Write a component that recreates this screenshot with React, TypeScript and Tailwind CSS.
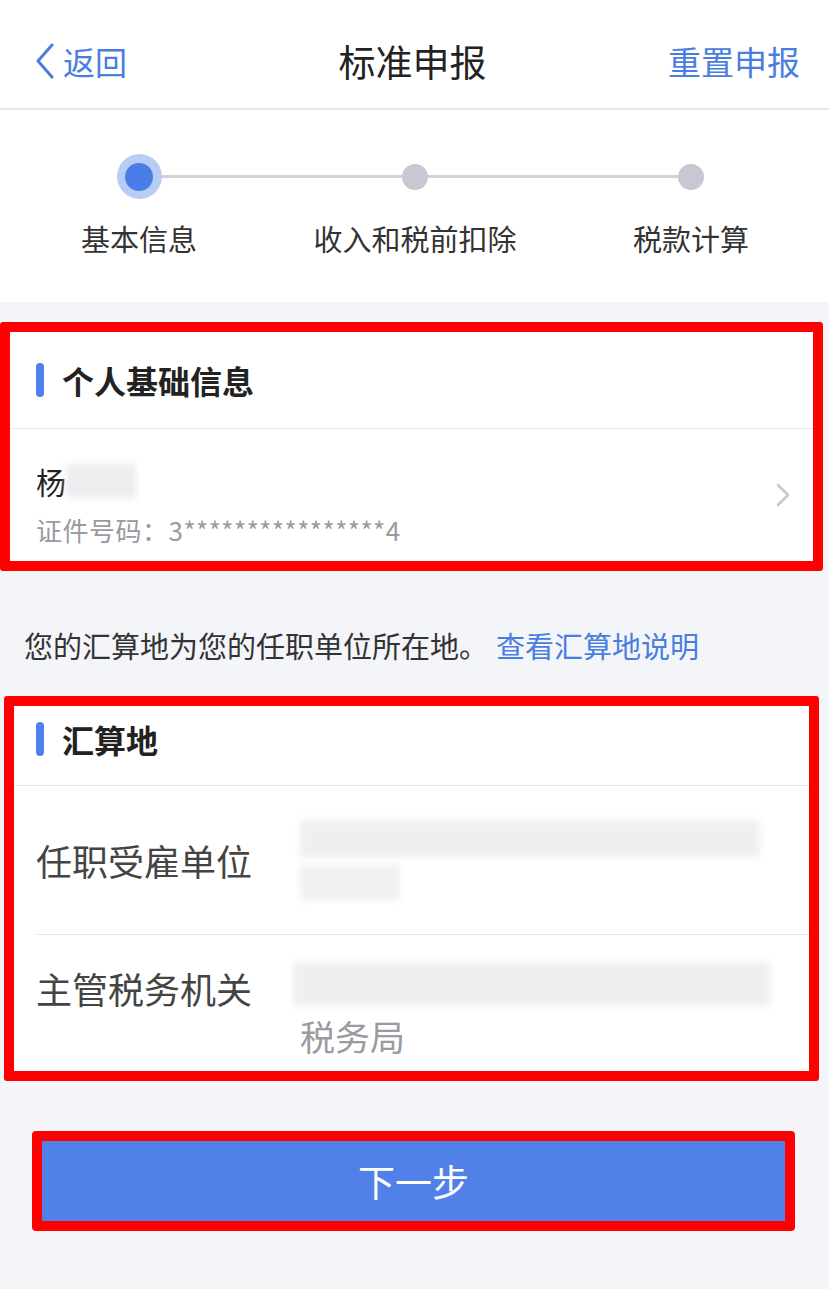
import React from 'react';

const steps = [
  { label: '基本信息', active: true },
  { label: '收入和税前扣除', active: false },
  { label: '税款计算', active: false },
];

const SectionTitle: React.FC<{ title: string; className?: string }> = ({ title, className }) => (
  <div className={`flex items-center gap-[18px] ${className ?? ''}`}>
    <span className="block w-[8px] h-[34px] rounded-full bg-[#4f7fe8]" />
    <span className="text-[32px] leading-[36px] font-semibold text-[#222]">{title}</span>
  </div>
);

const App: React.FC = () => {
  return (
    <div className="w-[829px] min-h-[1289px] bg-[#f3f5f9] font-['Noto_Sans_CJK_SC','Noto_Sans',sans-serif] text-[#222]">
      {/* nav bar */}
      <div className="h-[110px] bg-white border-b-2 border-[#e6e6e6] grid grid-cols-[1fr_auto_1fr] items-center pt-[14px] pl-[35px] pr-[29px]">
        <div className="flex items-center gap-[8px] text-[#4a7de0]">
          <svg width="20" height="36" viewBox="0 0 20 36" fill="none">
            <polyline points="17,2 3,18 17,34" stroke="#4a7de0" strokeWidth="3" strokeLinecap="round" strokeLinejoin="round" />
          </svg>
          <span className="text-[32px] leading-[40px]">返回</span>
        </div>
        <div className="text-[37px] leading-[44px] text-[#222] mr-[10px]">标准申报</div>
        <div className="text-[33px] leading-[40px] text-[#4a7de0] justify-self-end">重置申报</div>
      </div>

      {/* steps */}
      <div className="h-[192px] bg-white relative pl-[1px]">
        <div className="absolute left-[139px] right-[140px] top-[65px] h-[3px] bg-[#d2d2d6]" />
        <div className="grid grid-cols-[276px_276px_276px] relative">
          {steps.map((s) => (
            <div key={s.label} className="flex flex-col items-center pt-[44px]">
              <div className="h-[45px] flex items-center justify-center">
                {s.active ? (
                  <div className="w-[45px] h-[45px] rounded-full bg-[#b7cdf6] flex items-center justify-center">
                    <div className="w-[28px] h-[28px] rounded-full bg-[#4a7de6]" />
                  </div>
                ) : (
                  <div className="w-[26px] h-[26px] rounded-full bg-[#c8c8d2]" />
                )}
              </div>
              <div className="mt-[19px] text-[29px] leading-[40px] text-[#333] whitespace-nowrap">{s.label}</div>
            </div>
          ))}
        </div>
      </div>

      {/* personal info */}
      <div className="mt-[20px] mr-[6px] border-[10px] border-[#ff0000] rounded-[3px] bg-white">
        <div className="h-[97px] flex items-center pl-[26px] border-b border-[#e8e8e8]">
          <SectionTitle title="个人基础信息" />
        </div>
        <div className="h-[132px] flex items-start justify-between pl-[26px] pr-[22px] pt-[32px]">
          <div className="flex flex-col">
            <div className="flex items-center">
              <span className="text-[30px] leading-[40px] text-[#222]">杨</span>
              <span className="block w-[70px] h-[34px] bg-[#ededf0] blur-[3px]" />
            </div>
            <div className="mt-[12px] text-[26px] leading-[34px] text-[#9a9aa0] tracking-[0.5px]">
              证件号码：3****************4
            </div>
          </div>
          <svg className="self-center -mt-[32px]" width="16" height="26" viewBox="0 0 16 26" fill="none">
            <polyline points="3,3 13,13 3,23" stroke="#c8c8cc" strokeWidth="2.5" strokeLinecap="round" strokeLinejoin="round" />
          </svg>
        </div>
      </div>

      {/* note */}
      <div className="pt-[54px] pb-[31px] pl-[24px] text-[29px] leading-[40px] text-[#333] whitespace-nowrap">
        您的汇算地为您的任职单位所在地。<span className="ml-[8px] text-[#4a7de0]">查看汇算地说明</span>
      </div>

      {/* settlement place */}
      <div className="ml-[4px] mr-[10px] border-[10px] border-[#ff0000] rounded-[3px] bg-white">
        <div className="h-[80px] pt-[15px] pl-[22px] border-b border-[#e8e8e8]">
          <SectionTitle title="汇算地" />
        </div>
        <div className="ml-[22px] h-[149px] flex items-center border-b border-[#e8e8e8]">
          <div className="w-[264px] text-[36px] leading-[44px] text-[#444]">任职受雇单位</div>
          <div className="flex flex-col gap-[8px]">
            <div className="w-[460px] h-[37px] bg-[#efeff1] blur-[3px]" />
            <div className="w-[100px] h-[35px] bg-[#f1f1f3] blur-[3px]" />
          </div>
        </div>
        <div className="ml-[22px] h-[136px] flex items-start pt-[31px]">
          <div className="w-[257px] text-[36px] leading-[44px] text-[#444]">主管税务机关</div>
          <div className="flex flex-col">
            <div className="-mt-[4px] w-[477px] h-[44px] bg-[#efeff1] blur-[3px]" />
            <div className="mt-[8px] pl-[7px] text-[35px] leading-[44px] text-[#9a9aa0]">税务局</div>
          </div>
        </div>
      </div>

      {/* next button */}
      <div className="mt-[50px] ml-[32px] w-[763px] border-[10px] border-[#ff0000] rounded-[4px]">
        <div className="h-[80px] bg-[#5181e8] flex items-center justify-center text-white text-[37px] leading-[44px]">
          下一步
        </div>
      </div>
    </div>
  );
};

export default App;
